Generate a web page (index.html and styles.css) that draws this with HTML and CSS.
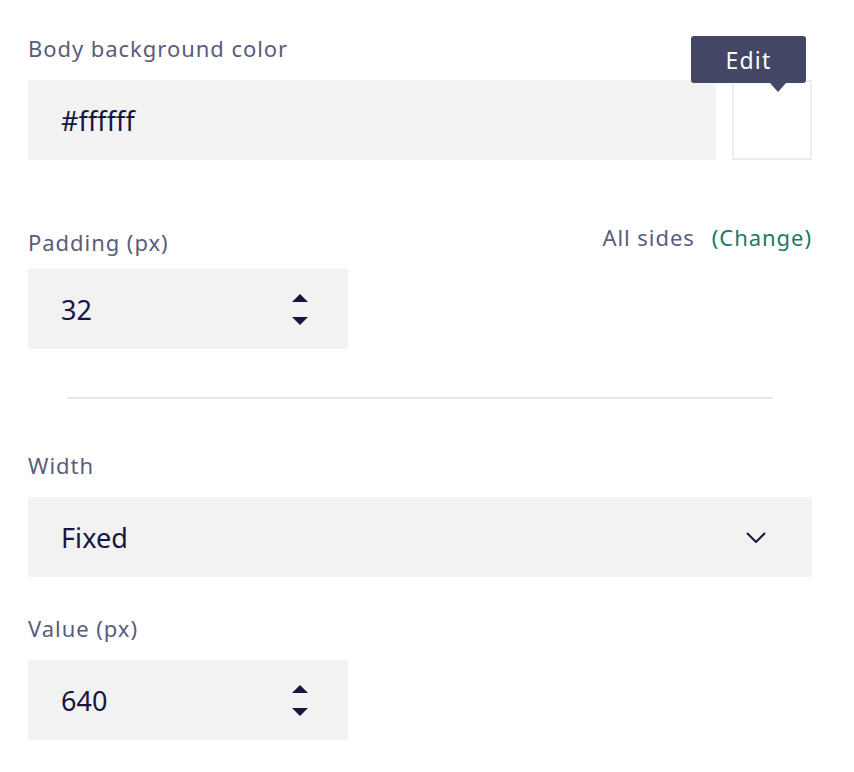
FILE: index.html
```html
<!DOCTYPE html>
<html>
<head>
<meta charset="utf-8">
<link rel="stylesheet" href="styles.css">
</head>
<body>
<div class="panel">
  <div class="field">
    <div class="label">Body background color</div>
    <div class="color-row">
      <div class="input wide">#ffffff</div>
      <div class="swatch">
        <div class="tooltip">Edit</div>
      </div>
    </div>
  </div>

  <div class="field padding-field">
    <div class="label-row">
      <span class="label">Padding (px)</span>
      <span class="sides"><span class="muted">All sides</span><span class="change">(Change)</span></span>
    </div>
    <div class="input number">
      <span>32</span>
      <svg class="spinner" width="16" height="31" viewBox="0 0 16 31"><path d="M8 0 L16 8 L0 8 Z" fill="#16163f"/><path d="M0 23 L16 23 L8 31 Z" fill="#16163f"/></svg>
    </div>
  </div>

  <hr class="divider">

  <div class="field width-field">
    <div class="label">Width</div>
    <div class="input select">
      <span>Fixed</span>
      <svg class="chevron" width="20" height="11" viewBox="0 0 20 11"><path d="M1 1 L10 10 L19 1" fill="none" stroke="#16163f" stroke-width="2"/></svg>
    </div>
  </div>

  <div class="field value-field">
    <div class="label">Value (px)</div>
    <div class="input number">
      <span>640</span>
      <svg class="spinner" width="16" height="31" viewBox="0 0 16 31"><path d="M8 0 L16 8 L0 8 Z" fill="#16163f"/><path d="M0 23 L16 23 L8 31 Z" fill="#16163f"/></svg>
    </div>
  </div>
</div>
</body>
</html>
```
FILE: styles.css
```css
* { box-sizing: border-box; }
body {
  margin: 0;
  background: #ffffff;
  font-family: "Noto Sans", "Liberation Sans", sans-serif;
}
.panel {
  width: 784px;
  margin-left: 28px;
  padding-top: 34px;
}
.label {
  display: block;
  font-size: 22px;
  line-height: 28px;
  color: #5a5d7b;
  letter-spacing: 0.95px;
}
.field > .label { margin-bottom: 18px; }
.color-row {
  display: flex;
  gap: 16px;
}
.input {
  height: 80px;
  background: #f2f2f2;
  display: flex;
  align-items: center;
  padding-left: 33px;
  font-size: 27px;
  color: #16163f;
  letter-spacing: 0.1px;
}
.wide { flex: 1; }
.swatch {
  width: 80px;
  height: 80px;
  border: 2px solid #ededed;
  background: #fff;
  position: relative;
}
.tooltip {
  position: absolute;
  left: -43px;
  top: -46px;
  width: 115px;
  height: 47px;
  background: #434665;
  border-radius: 3px;
  color: #fff;
  font-size: 23px;
  letter-spacing: 1.2px;
  display: flex;
  align-items: center;
  justify-content: center;
}
.tooltip::after {
  content: "";
  position: absolute;
  left: 79px;
  top: 47px;
  border-left: 8px solid transparent;
  border-right: 8px solid transparent;
  border-top: 9px solid #434665;
}
.padding-field { margin-top: 68px; }
.label-row {
  display: flex;
  justify-content: space-between;
  align-items: center;
  margin-bottom: 13px;
}
.sides {
  display: flex;
  gap: 17px;
  font-size: 22px;
  line-height: 28px;
  letter-spacing: 0.95px;
  margin-top: -10px;
}
.muted { color: #5a5d7b; }
.change { color: #1a7a69; }
.number {
  width: 320px;
  justify-content: space-between;
  padding-right: 40px;
}
.select {
  justify-content: space-between;
  padding-right: 46px;
}
.divider {
  border: 0;
  height: 2px;
  background: #e6e6ec;
  margin: 48px 39px 0;
}
.width-field { margin-top: 52px; }
.value-field { margin-top: 37px; }
svg { display: block; }
```
